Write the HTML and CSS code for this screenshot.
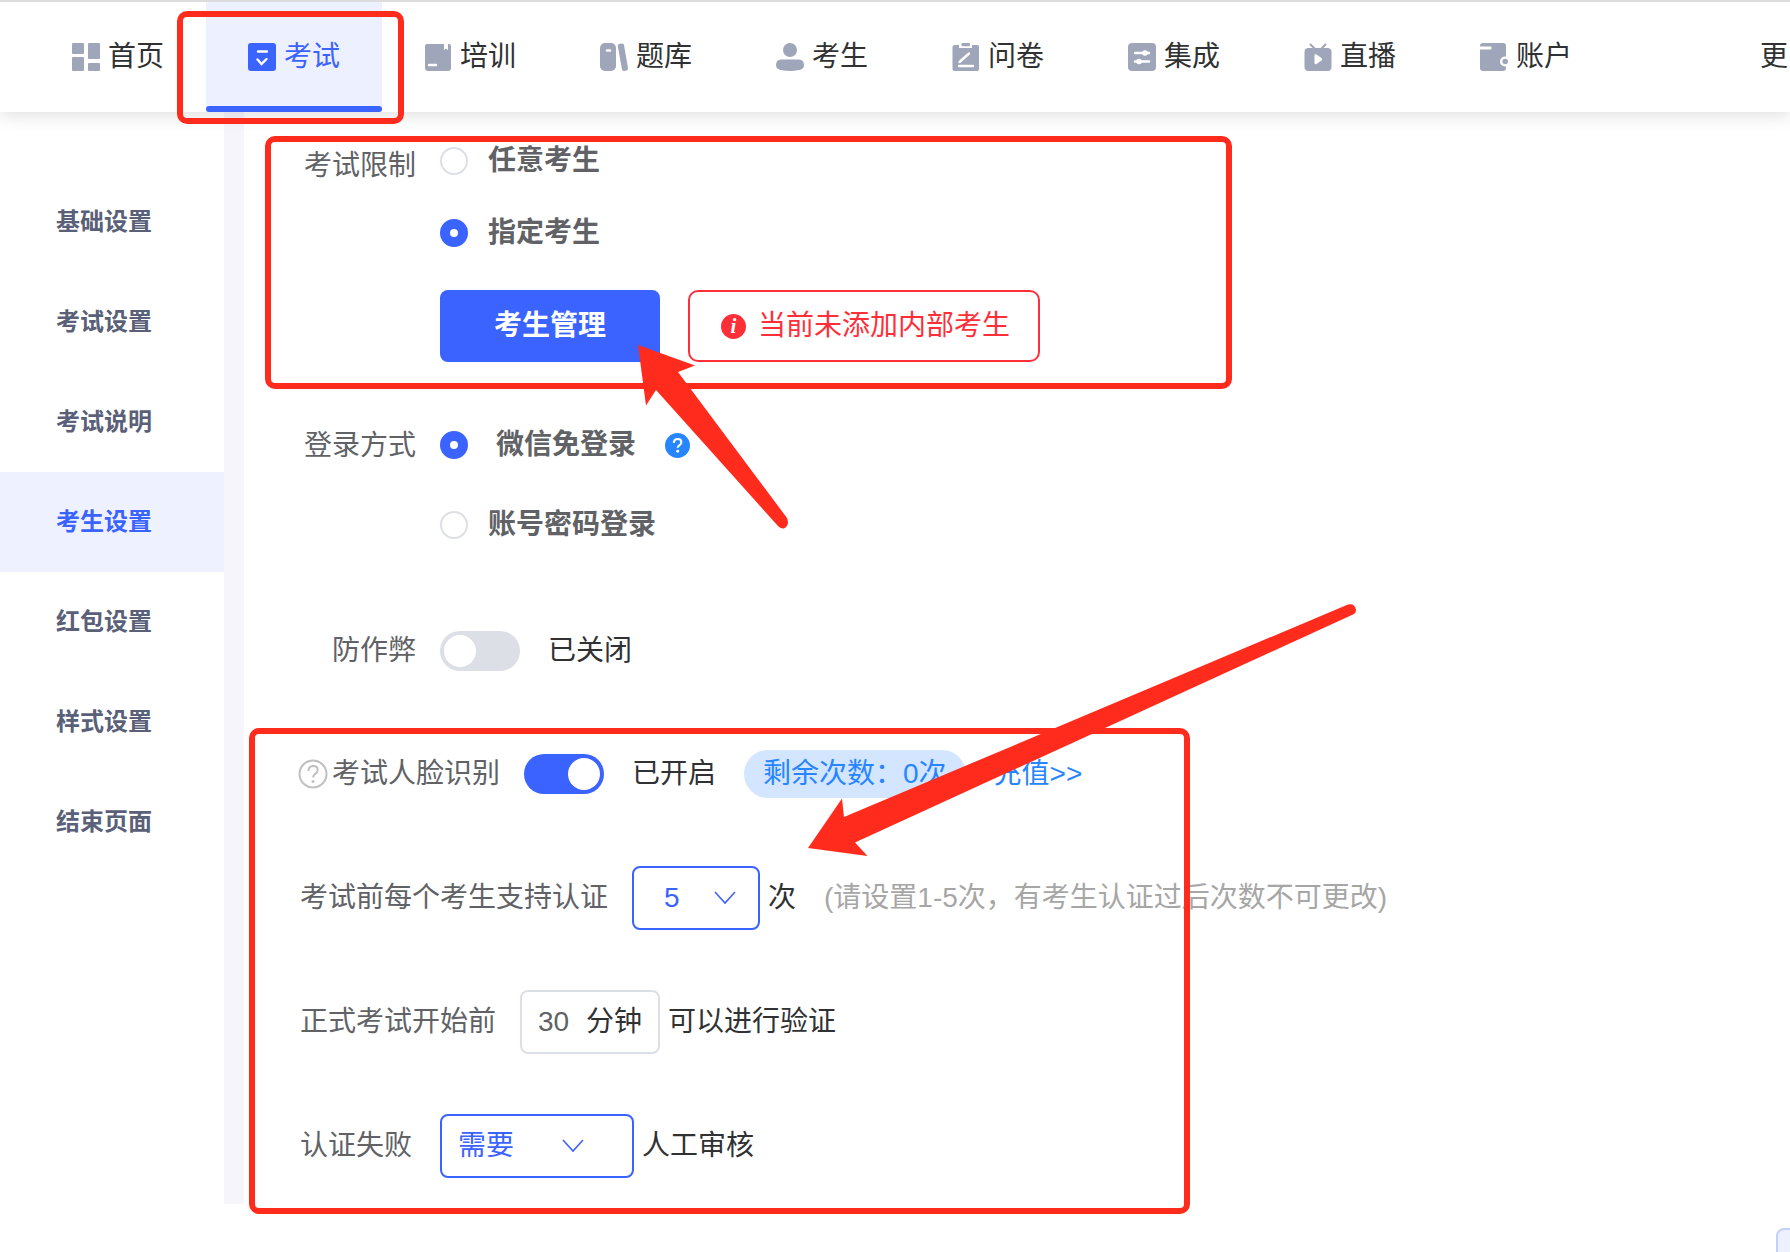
FILE: index.html
```html
<!DOCTYPE html>
<html lang="zh-CN">
<head>
    <meta charset="UTF-8">
    <meta name="viewport" content="width=device-width, initial-scale=1.0">
    <title>考生设置</title>
    <link rel="stylesheet" href="styles.css">
</head>
<body>
    <header class="header">
        <nav class="nav">
            <a href="#" class="nav-item">
                <svg class="nav-icon" viewBox="0 0 28 28"><rect width="12" height="11" rx="1"/><rect y="14" width="12" height="14" rx="1"/><rect x="16" width="12" height="16" rx="1"/><rect x="16" y="20" width="12" height="8" rx="1"/></svg>
                首页
            </a>
            <a href="#" class="nav-item active">
                <svg class="nav-icon" viewBox="0 0 28 28"><rect width="28" height="28" rx="3"/><path class="cut-line" d="M10 8.500h9M9.500 16.500l4 4.500 5-5"/></svg>
                考试
            </a>
            <a href="#" class="nav-item">
                <svg class="nav-icon" viewBox="0 0 28 28"><path d="M3 1h17v6l2-1.500 2 1.500V1h1q2 0 2 2v22q0 3-3 3H4q-3 0-3-3V3q0-2 2-2z"/><path class="cut-line" d="M5 22h7"/></svg>
                培训
            </a>
            <a href="#" class="nav-item">
                <svg class="nav-icon" viewBox="0 0 28 28"><rect width="16" height="28" rx="5"/><path class="cut-line" d="M7 7.500h3"/><path d="M19 1l3-.4q1.500 0 2 1.400l4 23q0 2-1.500 2.500l-2.500.4q-1.500 0-2-1.500L17.800 3q0-1.500 1.200-2z"/></svg>
                题库
            </a>
            <a href="#" class="nav-item">
                <svg class="nav-icon" viewBox="0 0 28 28"><circle cx="14" cy="7" r="7"/><path d="M5 16.500h18q5 0 5 6 0 3-5 4.500-9 2-18 0-5-1.500-5-4.500 0-6 5-6z"/></svg>
                考生
            </a>
            <a href="#" class="nav-item">
                <svg class="nav-icon" viewBox="0 0 28 28"><path d="M2.500 2H7v3h13V2h5q2 0 2 2v22q0 2-2 2H2.500q-2 0-2-2V4q0-2 2-2z"/><rect x="9.500" y="0" width="8.500" height="3.200" rx="1"/><path class="cut-line" d="M7.500 19L17 10.500M7 23h14"/></svg>
                问卷
            </a>
            <a href="#" class="nav-item">
                <svg class="nav-icon" viewBox="0 0 28 28"><rect width="28" height="28" rx="4"/><path class="cut-line" d="M7 10h14M7 18.500h14"/><circle class="cut" cx="17" cy="10" r="2.800"/><circle class="cut" cx="11" cy="18.500" r="2.800"/></svg>
                集成
            </a>
            <a href="#" class="nav-item">
                <svg class="nav-icon" viewBox="0 0 28 28"><path class="line" d="M6.500 1.500l4 4M21.500 1.500l-4 4"/><rect x=".5" y="5" width="27" height="23" rx="4"/><path class="cut" d="M10.500 12.500q0-2 2-1l5 3.500q1.500 1.200 0 2.500l-5 3.500q-2 1-2-1z"/></svg>
                直播
            </a>
            <a href="#" class="nav-item">
                <svg class="nav-icon" viewBox="0 0 28 28"><rect width="26" height="28" rx="3"/><rect class="cut" x="-1" y="3.500" width="12.500" height="3" rx="1"/><circle class="cut" cx="25" cy="18.500" r="5"/><circle cx="25.200" cy="18.500" r="2.800"/></svg>
                账户
            </a>
            <a href="#" class="nav-item nav-more">更</a>
        </nav>
    </header>

    <div class="layout">
        <aside class="sidebar">
            <a href="#">基础设置</a>
            <a href="#">考试设置</a>
            <a href="#">考试说明</a>
            <a href="#" class="active">考生设置</a>
            <a href="#">红包设置</a>
            <a href="#">样式设置</a>
            <a href="#">结束页面</a>
        </aside>

        <main class="main">
            <form>
                <!-- 考试限制 -->
                <div class="form-item limit">
                    <span class="form-label">考试限制</span>
                    <div class="form-content">
                        <label class="radio"><input type="radio" name="limit">任意考生</label>
                        <label class="radio"><input type="radio" name="limit" checked>指定考生</label>
                        <div class="limit-actions">
                            <button type="button" class="btn">考生管理</button>
                            <div class="alert">
                                <svg class="tip-icon" viewBox="0 0 24 24"><circle cx="12" cy="12" r="12" fill="#ff2f3a"/><text class="tip-text" x="12" y="18" text-anchor="middle">i</text></svg>
                                当前未添加内部考生
                            </div>
                        </div>
                    </div>
                </div>

                <!-- 登录方式 -->
                <div class="form-item login">
                    <span class="form-label">登录方式</span>
                    <div class="form-content">
                        <div class="radio-line">
                            <label class="radio radio-wide"><input type="radio" name="login" checked>微信免登录</label>
                            <svg class="tip-icon" viewBox="0 0 24 24"><circle cx="12" cy="12" r="12" fill="#2786ff"/><path d="M8.500 9.500q0-3.800 3.700-3.800 3.500 0 3.500 3.200 0 1.800-1.900 3-1.600 1-1.600 2.300" fill="none" stroke="#fff" stroke-width="2"/><circle cx="12.200" cy="17.500" r="1.400" fill="#fff"/></svg>
                        </div>
                        <label class="radio"><input type="radio" name="login">账号密码登录</label>
                    </div>
                </div>

                <!-- 防作弊 -->
                <div class="form-item cheat">
                    <label class="form-label" for="cheat">防作弊</label>
                    <div class="switch-line">
                        <input type="checkbox" class="switch" id="cheat">
                        <span>已关闭</span>
                    </div>
                </div>

                <!-- 人脸识别 -->
                <div class="face">
                    <div class="face-row">
                        <svg class="help-icon" viewBox="0 0 30 30"><circle cx="15" cy="15" r="13.500"/><path d="M10.500 12q0-5 4.700-5 4.500 0 4.500 4 0 2.200-2.400 3.800-2.200 1.500-2.200 3.700"/><circle class="dot" cx="15" cy="22.500" r="1.500"/></svg>
                        <label class="face-label" for="face">考试人脸识别</label>
                        <div class="switch-line">
                            <input type="checkbox" class="switch" id="face" checked>
                            <span>已开启</span>
                        </div>
                        <span class="pill">剩余次数：0次</span>
                        <a href="#" class="recharge">充值&gt;&gt;</a>
                    </div>
                    <div class="face-row">
                        <label class="face-label" for="times">考试前每个考生支持认证</label>
                        <div class="select">
                            <select id="times" class="select-times">
                                <option>5</option>
                            </select>
                            <svg class="chevron" viewBox="0 0 22 14"><path d="M1 1l10 11L21 1"/></svg>
                        </div>
                        <span class="unit">次</span>
                        <span class="hint">(请设置1-5次，有考生认证过后次数不可更改)</span>
                    </div>
                    <div class="face-row">
                        <label class="face-label" for="minutes">正式考试开始前</label>
                        <div class="minutes">
                            <input type="text" id="minutes" value="30">
                            <span>分钟</span>
                        </div>
                        <span class="unit">可以进行验证</span>
                    </div>
                    <div class="face-row">
                        <label class="face-label fail-label" for="audit">认证失败</label>
                        <div class="select">
                            <select id="audit" class="select-audit">
                                <option>需要</option>
                            </select>
                            <svg class="chevron chevron-audit" viewBox="0 0 22 14"><path d="M1 1l10 11L21 1"/></svg>
                        </div>
                        <span class="unit">人工审核</span>
                    </div>
                </div>
            </form>
        </main>
    </div>

    <button type="button" class="float-btn" aria-label="客服"></button>

    <!-- red marks over the page -->
    <svg class="marks" viewBox="0 0 1790 1252">
        <rect x="180" y="14" width="221" height="107" rx="7"/>
        <rect x="268" y="139" width="961" height="247" rx="7"/>
        <rect x="252" y="731" width="935" height="480" rx="7"/>
        <path d="M638 345L695 365.500 678 372 787 518Q790 525 784 528.500 781 529 778 526L656 390 646 405.500z"/>
        <path d="M808 848L842 798.500 844 817 1348 604.500Q1355 603 1356 610 1356 613 1353 614.500L855 842.500 867.500 856z"/>
    </svg>
</body>
</html>
```
FILE: styles.css
```css
* {
    box-sizing: border-box;
}
body {
    margin: 0;
    overflow-x: hidden;
    background-color: #fff;
    color: #303133;
    font-family: "Liberation Sans", "Noto Sans CJK SC", sans-serif;
    font-size: 28px;
    line-height: 40px;
}
a {
    text-decoration: none;
}
input, select, button {
    margin: 0;
    font-family: inherit;
    font-size: 28px;
    line-height: 40px;
}

/* header */
.header {
    position: relative;
    z-index: 1;
    border-top: 2px solid #dcdcdc;
    background-color: #fff;
    box-shadow: 0 4px 16px rgba(0, 0, 0, 0.12);
}
.nav {
    display: flex;
    height: 110px;
    padding-left: 30px;
    overflow: hidden;
}
.nav-item {
    flex: 0 0 176px;
    display: flex;
    align-items: center;
    justify-content: center;
    gap: 8px;
    color: #303133;
}
.nav-item.active {
    position: relative;
    background-color: #ecf0ff;
    color: #3b63ff;
}
.nav-item.active::after {
    content: "";
    position: absolute;
    left: 0;
    right: 0;
    bottom: 0;
    height: 6px;
    border-radius: 3px;
    background-color: #3b63ff;
}
.nav-more {
    flex: 0 0 auto;
    margin-left: auto;
    padding-right: 2px;
}
.nav-icon {
    width: 28px;
    height: 28px;
    fill: #9fa6b9;
}
.active .nav-icon {
    fill: #3b63ff;
}
.nav-icon .cut {
    fill: #fff;
}
.nav-icon .cut-line {
    fill: none;
    stroke: #fff;
    stroke-width: 2.4;
    stroke-linecap: round;
}
.nav-icon .line {
    stroke: #9fa6b9;
    stroke-width: 2;
    stroke-linecap: round;
}

/* sidebar */
.layout {
    display: flex;
}
.sidebar {
    flex: 0 0 244px;
    padding-top: 60px;
    border-right: 20px solid #f5f5fb;
}
.sidebar a {
    display: block;
    padding-left: 56px;
    color: #596078;
    font-size: 24px;
    font-weight: 700;
    line-height: 100px;
}
.sidebar a.active {
    background-color: #eef1ff;
    color: #3b63ff;
}

/* form */
.main {
    flex: 1;
    padding: 29px 0 26px;
}
.form-item {
    display: flex;
    gap: 24px;
}
.form-label {
    width: 172px;
    text-align: right;
    color: #606266;
}
.form-content {
    display: flex;
    flex-direction: column;
    align-items: flex-start;
}
.limit .form-label {
    line-height: 50px;
}
.limit .form-content {
    gap: 32px;
}
.limit-actions {
    display: flex;
    gap: 28px;
    padding-top: 5px;
}
.login {
    margin-top: 63px;
}
.login .form-label {
    line-height: 42px;
}
.login .form-content {
    gap: 40px;
}
.cheat {
    margin-top: 86px;
}
.radio {
    display: flex;
    align-items: center;
    gap: 20px;
    color: #606266;
    font-weight: 700;
}
.radio-wide {
    gap: 28px;
}
.radio-line {
    display: flex;
    align-items: center;
    gap: 29px;
}
.radio input {
    appearance: none;
    width: 28px;
    height: 28px;
    border: 2px solid #dcdfe6;
    border-radius: 50%;
    background-color: #fff;
}
.radio input:checked {
    border: 10px solid #3b63ff;
}
.btn {
    width: 220px;
    height: 72px;
    border: none;
    border-radius: 8px;
    background-color: #3b63ff;
    color: #fff;
    font-weight: 700;
    cursor: pointer;
}
.alert {
    display: flex;
    align-items: center;
    gap: 12px;
    padding: 0 28px 0 31px;
    border: 2px solid #ff2f3a;
    border-radius: 10px;
    color: #ff2f3a;
}
.tip-icon {
    width: 25px;
    height: 25px;
}
.tip-text {
    fill: #fff;
    font-family: "Liberation Serif", serif;
    font-size: 20px;
    font-style: italic;
    font-weight: 700;
}
.switch-line {
    display: flex;
    align-items: center;
    gap: 28px;
}
.switch {
    appearance: none;
    width: 80px;
    height: 40px;
    padding: 4px;
    border-radius: 20px;
    background-color: #dcdfe6;
    cursor: pointer;
}
.switch::before {
    content: "";
    display: block;
    width: 32px;
    height: 32px;
    border-radius: 50%;
    background-color: #fff;
}
.switch:checked {
    background-color: #3b63ff;
}
.switch:checked::before {
    margin-left: auto;
}

/* face recognition */
.face {
    display: flex;
    flex-direction: column;
    gap: 60px;
    margin-top: 71px;
    padding-left: 56px;
}
.face-row {
    display: flex;
    align-items: center;
    height: 64px;
    white-space: nowrap;
}
.face-label {
    margin-right: 24px;
    color: #606266;
}
.fail-label {
    margin-right: 28px;
}
.help-icon {
    width: 30px;
    height: 30px;
    margin-left: -2px;
    margin-right: 4px;
    fill: none;
    stroke: #c0c0c0;
    stroke-width: 2;
}
.help-icon .dot {
    fill: #c0c0c0;
    stroke: none;
}
.pill {
    margin-left: 28px;
    padding: 4px 19px;
    border-radius: 24px;
    background-color: #d3e5ff;
    color: #2786ff;
}
.recharge {
    margin-left: 28px;
    color: #2786ff;
}
.select {
    position: relative;
}
.select select {
    appearance: none;
    height: 64px;
    border: 2px solid #3b63ff;
    border-radius: 8px;
    background-color: #fff;
    color: #3b63ff;
}
.select-times {
    width: 128px;
    padding: 0 30px;
}
.select-audit {
    width: 194px;
    padding: 0 16px;
}
.chevron {
    position: absolute;
    top: 25px;
    right: 24px;
    width: 22px;
    height: 14px;
    fill: none;
    stroke: #3b63ff;
    stroke-width: 1.6;
    pointer-events: none;
}
.chevron-audit {
    right: 50px;
}
.unit {
    margin-left: 8px;
}
.hint {
    margin-left: 28px;
    color: #a6a6a6;
}
.minutes {
    display: flex;
    align-items: center;
    width: 140px;
    height: 64px;
    padding: 0 16px;
    border: 2px solid #dcdfe6;
    border-radius: 8px;
}
.minutes input {
    width: 48px;
    padding: 0;
    border: none;
    color: #606266;
}

.float-btn {
    position: fixed;
    right: -66px;
    bottom: -56px;
    width: 80px;
    height: 80px;
    border: 2px solid #c3cffc;
    border-radius: 8px;
    background-color: #ecf0ff;
}

.marks {
    position: absolute;
    top: 0;
    left: 0;
    z-index: 2;
    width: 1790px;
    height: 1252px;
    fill: #ff2b1d;
    pointer-events: none;
}
.marks rect {
    fill: none;
    stroke: #ff2b1d;
    stroke-width: 6;
}
```
